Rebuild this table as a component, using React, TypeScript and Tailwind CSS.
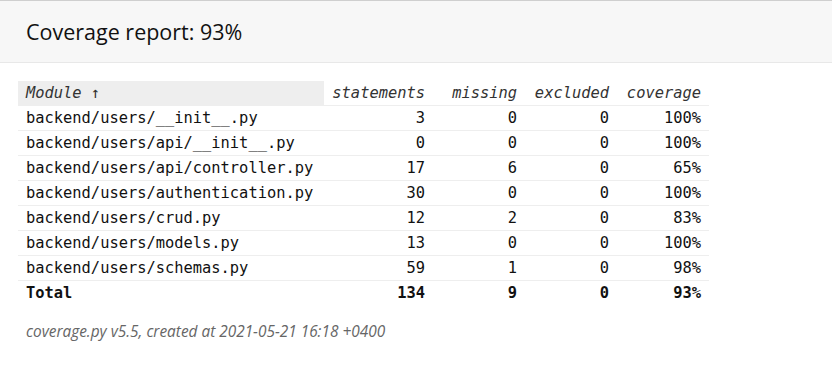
const rows = [
  { name: 'backend/users/__init__.py', stmts: 3, miss: 0, excl: 0, cov: '100%' },
  { name: 'backend/users/api/__init__.py', stmts: 0, miss: 0, excl: 0, cov: '100%' },
  { name: 'backend/users/api/controller.py', stmts: 17, miss: 6, excl: 0, cov: '65%' },
  { name: 'backend/users/authentication.py', stmts: 30, miss: 0, excl: 0, cov: '100%' },
  { name: 'backend/users/crud.py', stmts: 12, miss: 2, excl: 0, cov: '83%' },
  { name: 'backend/users/models.py', stmts: 13, miss: 0, excl: 0, cov: '100%' },
  { name: 'backend/users/schemas.py', stmts: 59, miss: 1, excl: 0, cov: '98%' },
]

const mono = { fontFamily: '"DejaVu Sans Mono", monospace' }

export default function App() {
  return (
    <div className="min-h-[386px] bg-white text-black" style={{ fontFamily: '"Open Sans", sans-serif' }}>
      <div className="h-[63px] border-t border-b border-t-[#cfcfcf] border-b-[#e8e8e8] bg-[#f7f7f7] px-[26px] flex items-center">
        <h1 className="text-[21.5px] leading-none text-[#111]">Coverage report: 93%</h1>
      </div>

      <div className="pl-[18px] pt-[18px]" style={mono}>
        <table className="border-collapse text-[15.4px] leading-[18px] text-[#111]">
          <thead>
            <tr className="border-b border-[#eee]">
              <th className="w-[306px] bg-[#eee] px-2 py-[3px] text-left font-normal italic text-[#333]">Module ↑</th>
              <th className="w-[109px] px-2 py-[3px] text-right font-normal italic text-[#333]">statements</th>
              <th className="w-[92px] px-2 py-[3px] text-right font-normal italic text-[#333]">missing</th>
              <th className="w-[92px] px-2 py-[3px] text-right font-normal italic text-[#333]">excluded</th>
              <th className="w-[92px] px-2 py-[3px] text-right font-normal italic text-[#333]">coverage</th>
            </tr>
          </thead>
          <tbody>
            {rows.map((r) => (
              <tr key={r.name} className="border-b border-[#eee]">
                <td className="px-2 py-[3px] text-left">{r.name}</td>
                <td className="px-2 py-[3px] text-right">{r.stmts}</td>
                <td className="px-2 py-[3px] text-right">{r.miss}</td>
                <td className="px-2 py-[3px] text-right">{r.excl}</td>
                <td className="px-2 py-[3px] text-right">{r.cov}</td>
              </tr>
            ))}
            <tr className="font-bold">
              <td className="px-2 py-[3px] text-left">Total</td>
              <td className="px-2 py-[3px] text-right">134</td>
              <td className="px-2 py-[3px] text-right">9</td>
              <td className="px-2 py-[3px] text-right">0</td>
              <td className="px-2 py-[3px] text-right">93%</td>
            </tr>
          </tbody>
        </table>
      </div>

      <p className="mt-[16px] px-[26px] text-[15.4px] leading-[22px] italic text-[#666]">
        coverage.py v5.5, created at 2021-05-21 16:18 +0400
      </p>
    </div>
  )
}
